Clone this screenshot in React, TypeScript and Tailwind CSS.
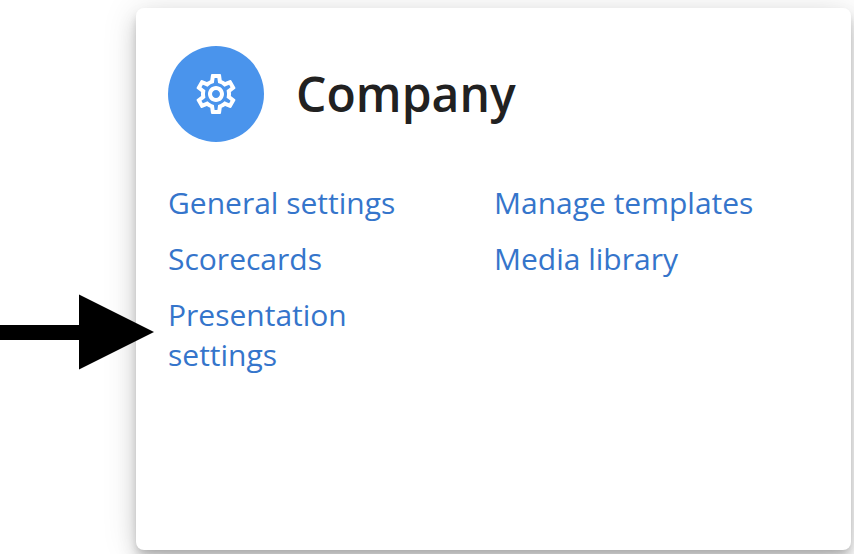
import React from "react";
import { MdOutlineSettings } from "react-icons/md";

const columns = [
  ["General settings", "Scorecards", "Presentation settings"],
  ["Manage templates", "Media library"],
];

function LinkColumn({ links }: { links: string[] }) {
  return (
    <ul className="flex w-[262px] flex-col gap-4">
      {links.map((link) => (
        <li key={link}>
          <a href="#" className="block text-[30px] leading-10 text-[#3575cb]">
            {link}
          </a>
        </li>
      ))}
    </ul>
  );
}

export default function App() {
  return (
    <div className="relative h-[554px] w-[854px] overflow-hidden bg-white pt-2 pl-[136px] font-['Open_Sans',sans-serif]">
      <section className="h-[542px] w-[715px] rounded-lg bg-white px-8 pt-[38px] shadow-[0_6px_10px_-2px_rgba(0,0,0,0.2),0_12px_20px_0_rgba(0,0,0,0.14),0_2px_36px_0_rgba(0,0,0,0.12)]">
        <header className="flex items-center gap-8">
          <div className="flex size-24 items-center justify-center rounded-full bg-[#4a94ec] text-white">
            <MdOutlineSettings className="size-12" />
          </div>
          <h1 className="text-5xl font-semibold tracking-[0.05px] text-[#212121]">
            Company
          </h1>
        </header>
        <div className="mt-[41px] flex gap-16">
          {columns.map((links) => (
            <LinkColumn key={links[0]} links={links} />
          ))}
        </div>
      </section>
      <svg
        className="absolute top-[294px] left-0 h-[76px] w-[154px]"
        viewBox="0 0 154 76"
        fill="#000"
      >
        <path d="M0 31H79V.5L154 38 79 75.5V46H0z" />
      </svg>
    </div>
  );
}
